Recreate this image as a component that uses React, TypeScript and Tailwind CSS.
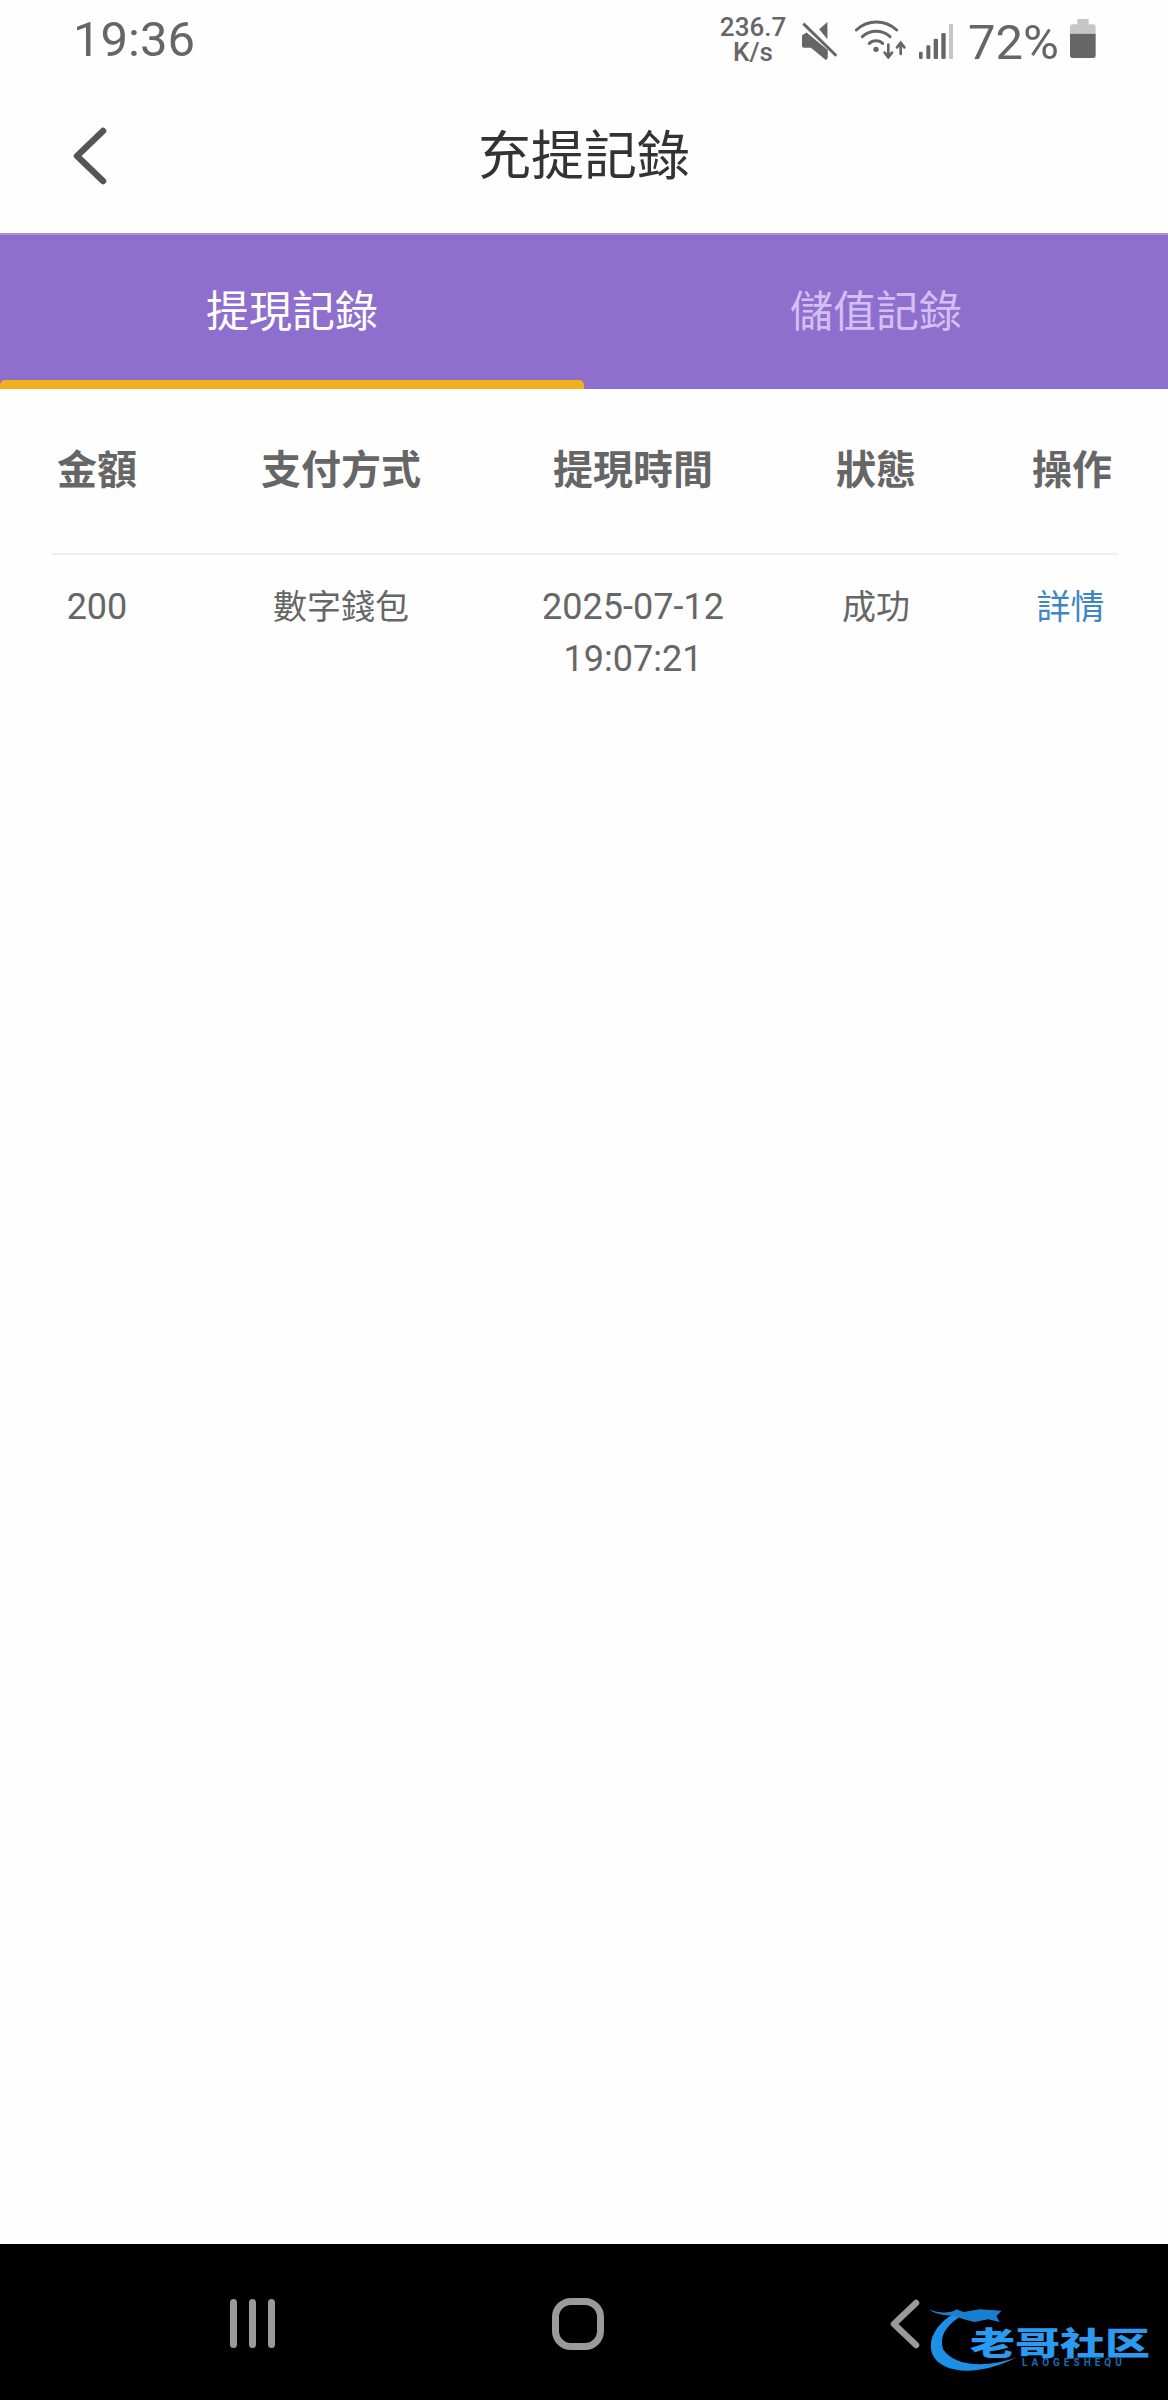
const font = "font-['Roboto','Noto_Sans_CJK_TC',sans-serif]";

function MuteIcon() {
  return (
    <svg width="37" height="42" viewBox="355 55 112 125" className="mt-[-1px]">
      <path d="M410 82 L435 60 V112 Z" fill="#666" />
      <path d="M372 92 L358 100 V130 Q358 138 367 138 H385 L430 175 Q436 173 436 165 V145 Z" fill="#666" />
      <path d="M362 65 L462 162" stroke="#666" strokeWidth="9" fill="none" />
    </svg>
  );
}

function WifiIcon() {
  return (
    <svg width="51" height="39" viewBox="515 58 153 117" fill="none" stroke="#666" strokeLinecap="round">
      <path d="M519 88 C553 56 605 56 640 88" strokeWidth="9" />
      <path d="M537 108 C560 86 597 86 620 108" strokeWidth="9" />
      <path d="M558 128 C568 118 588 118 598 128" strokeWidth="9" />
      <circle cx="578" cy="146" r="8" fill="#666" stroke="none" />
      <path d="M615 132 V168 M604 156 L615 170 L626 156" strokeWidth="8" />
      <path d="M652 160 V128 M641 140 L652 126 L663 140" strokeWidth="8" />
    </svg>
  );
}

function SignalIcon() {
  return (
    <svg width="34" height="35" viewBox="708 70 102 105">
      <rect x="708" y="153" width="11" height="22" rx="4" fill="#666" />
      <rect x="730" y="134" width="12" height="41" rx="4" fill="#666" />
      <rect x="752" y="114" width="13" height="61" rx="4" fill="#666" />
      <rect x="775" y="97" width="13" height="78" rx="4" fill="#666" />
      <rect x="798" y="70" width="12" height="105" rx="3" fill="#c6c6c6" />
    </svg>
  );
}

function BatteryIcon() {
  return (
    <svg width="26" height="39" viewBox="1158 58 78 117">
      <path d="M1180 58 H1214 V74 H1228 Q1235 74 1235 81 V102 H1158 V81 Q1158 74 1165 74 H1180 Z" fill="#c6c6c6" />
      <path d="M1158 102 H1235 V168 Q1235 175 1228 175 H1165 Q1158 175 1158 168 Z" fill="#666" />
    </svg>
  );
}

function StatusBar() {
  return (
    <div className="flex h-[78px] items-start justify-between pl-[73px] pr-[72px] pt-[10px]">
      <span className="text-[49px] leading-[60px] text-[#666]">19:36</span>
      <div className="flex items-start pt-[8px]">
        <div className="mt-[-3px] flex w-[66px] flex-col items-center text-[26px] font-medium leading-[25px] text-[#666]">
          <span>236.7</span>
          <span>K/s</span>
        </div>
        <div className="ml-[15px] mt-[3px]"><MuteIcon /></div>
        <div className="ml-[17px] mt-[2px]"><WifiIcon /></div>
        <div className="ml-[13px] mt-[6px]"><SignalIcon /></div>
        <span className="ml-[15px] mt-[-5px] text-[49px] leading-[60px] text-[#666]">72%</span>
        <div className="ml-[11px] mt-[1px]"><BatteryIcon /></div>
      </div>
    </div>
  );
}

function Header() {
  return (
    <div className="relative flex h-[155px] items-center justify-center pt-[2px]">
      <svg width="36" height="58" viewBox="0 0 36 58" fill="none" className="absolute left-[72px] top-[49px]">
        <path d="M31 4 L5 29 L31 54" stroke="#555" strokeWidth="6.5" strokeLinecap="round" strokeLinejoin="round" />
      </svg>
      <h1 className="text-[53px] font-normal leading-[70px] text-[#333]">充提記錄</h1>
    </div>
  );
}

function Tabs() {
  return (
    <div className="relative flex h-[156px] border-t-2 border-[#a893cf] bg-[#8e6fce]">
      <div className="flex w-1/2 items-start justify-center pt-[47px] text-[43px] leading-[60px] text-white">提現記錄</div>
      <div className="flex w-1/2 items-start justify-center pt-[47px] text-[43px] leading-[60px] text-[#d3c0f2]">儲值記錄</div>
      <div className="absolute bottom-0 left-0 h-[9px] w-[584px] rounded-t-[5px] bg-[#eeb11c]" />
    </div>
  );
}

const cols = "grid grid-cols-[90px_398px_186px_300px_92px] text-center";

function Table() {
  return (
    <div className="mx-[52px] w-[1066px]">
      <div className={`${cols} h-[166px] items-start border-b-2 border-[#eeeeee] pt-[54px] text-[40px] font-bold leading-[56px] text-[#666]`}>
        <span>金額</span>
        <span>支付方式</span>
        <span className="whitespace-nowrap">提現時間</span>
        <span>狀態</span>
        <span>操作</span>
      </div>
      <div className={`${cols} pt-[26px] text-[34px] leading-[52px] text-[#666]`}>
        <span className="text-[36px]">200</span>
        <span>數字錢包</span>
        <span className="whitespace-nowrap text-[36px]">2025-07-12<br />19:07:21</span>
        <span>成功</span>
        <span className="pr-[3px] text-[#3d86c6]">詳情</span>
      </div>
    </div>
  );
}

function Logo() {
  return (
    <div className="absolute left-[928px] top-[61px] h-[72px] w-[225px]">
      <svg width="95" height="72" viewBox="265 165 285 216" className="absolute left-0 top-0">
        <path d="M345 190 C290 220 262 270 278 312 C300 368 410 385 532 322 C430 358 342 345 312 300 C296 265 318 225 365 198 Z" fill="#1c8fe6" />
        <path d="M268 178 C300 192 335 190 350 178 L372 186 L420 178 L486 182 L470 198 L480 216 L445 208 L405 216 L372 208 L340 196 C315 198 285 192 268 178 Z" fill="#1a7fd0" />
      </svg>
      <div className="absolute left-[42px] top-[22px] scale-y-[0.7] whitespace-nowrap font-['Noto_Sans_CJK_SC',sans-serif] text-[45px] font-black leading-[30px] text-[#2a9bf0]">老哥社区</div>
      <div className="absolute left-[94px] top-[53px] whitespace-nowrap text-[10px] font-bold leading-[10px] tracking-[4px] text-[#1a6cb0]">LAOGESHEQU</div>
    </div>
  );
}

function NavBar() {
  return (
    <div className="relative flex h-[156px] items-start bg-black pl-[230px] pt-[54px]">
      <div className="mt-[1px] flex gap-[12px]">
        <div className="h-[49px] w-[7px] rounded-full bg-[#9a9a9a]" />
        <div className="h-[49px] w-[7px] rounded-full bg-[#9a9a9a]" />
        <div className="h-[49px] w-[7px] rounded-full bg-[#9a9a9a]" />
      </div>
      <div className="ml-[277px] h-[52px] w-[52px] rounded-[19px] border-[7px] border-[#9a9a9a]" />
      <svg width="30" height="50" viewBox="0 0 30 50" fill="none" className="ml-[286px] mt-[1px]">
        <path d="M26 4 L4 25 L26 46" stroke="#9a9a9a" strokeWidth="6.5" strokeLinecap="round" strokeLinejoin="round" />
      </svg>
      <Logo />
    </div>
  );
}

export default function App() {
  return (
    <div className={`${font} flex h-[2400px] w-[1168px] flex-col bg-[#fefefe]`}>
      <StatusBar />
      <Header />
      <Tabs />
      <main className="flex-1">
        <Table />
      </main>
      <NavBar />
    </div>
  );
}
